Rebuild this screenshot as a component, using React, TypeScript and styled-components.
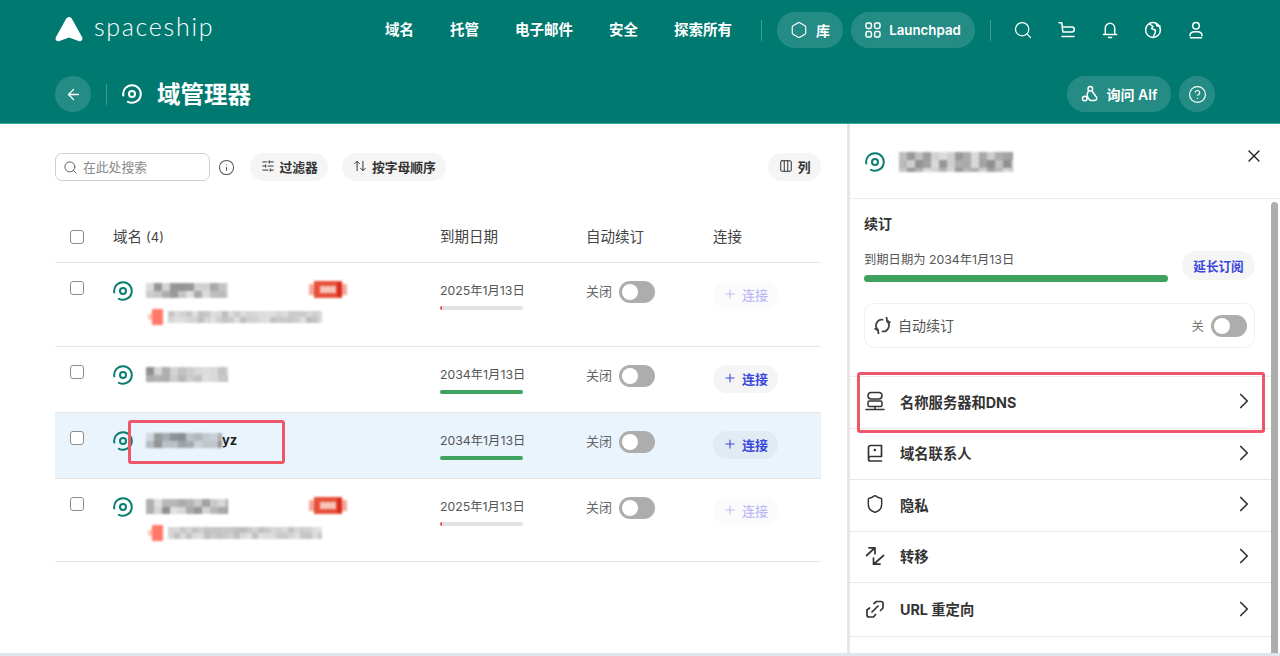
import { ReactNode } from 'react'
import styled, { createGlobalStyle } from 'styled-components'
import {
  ArrowLeft,
  ArrowUpDown,
  ChevronRight,
  CircleHelp,
  Columns3,
  Hexagon,
  Info,
  Plus,
  Search,
  Shield,
  SlidersHorizontal,
  X,
} from 'lucide-react'

const FONT = `Inter, "Noto Sans CJK SC", "Noto Sans", sans-serif`
const TEAL = '#007a70'

const GlobalStyle = createGlobalStyle`
  html, body {
    margin: 0;
    height: 656px;
    overflow: hidden;
    background: #fff;
    font-family: ${FONT};
  }
  * {
    box-sizing: border-box;
  }
`

function Mosaic({ width, height, seed, cell = 8, dark = 0.5 }: { width: number; height: number; seed: number; cell?: number; dark?: number }) {
  const cells = []
  let value = seed
  for (let y = 0; y < height; y += cell) {
    for (let x = 0; x < width; x += cell) {
      value = (value * 7919 + 104729) % 997
      cells.push(<rect key={`${x}-${y}`} x={x} y={y} width={cell} height={cell} fill={`rgba(90,90,90,${(0.18 + (value / 997) * dark).toFixed(2)})`} />)
    }
  }
  return (
    <BlurSvg width={width} height={height} viewBox={`0 0 ${width} ${height}`}>
      {cells}
    </BlurSvg>
  )
}

const RedTag = () => (
  <BlurSvg width={38} height={17} viewBox="0 0 38 17">
    <rect x="0" y="3" width="38" height="11" fill="#f4a79b" />
    <rect x="5" y="0" width="28" height="17" fill="#e8503c" />
    <rect x="11" y="5" width="16" height="7" fill="#f6c4ba" />
    <rect x="28" y="1" width="5" height="15" fill="#dc2a18" />
  </BlurSvg>
)

const SquareTag = () => (
  <BlurSvg width={15} height={16} viewBox="0 0 15 16">
    <rect x="0" y="5" width="15" height="6" fill="#ffc2b8" />
    <rect x="4" y="0" width="11" height="16" fill="#ff7a68" />
  </BlurSvg>
)

const DiscIcon = ({ color = '#0b7d72', size = 20 }: { color?: string; size?: number }) => (
  <svg width={size} height={size} viewBox="0 0 20 20" fill="none" stroke={color} strokeWidth="2" strokeLinecap="round">
    <circle cx="10" cy="10" r="3" />
    <path d="M1.300 11.500A8.800 8.800 0 1 1 6 17.800" />
  </svg>
)

const CartIcon = () => (
  <svg width="18" height="18" viewBox="0 0 18 18" fill="none" stroke="currentColor" strokeWidth="1.5" strokeLinecap="round" strokeLinejoin="round">
    <path d="M1 1.800h2.800l1 9.200h9a2.500 2.500 0 0 0 0-5H4.300" />
    <path d="M4 15.500h12" />
  </svg>
)

const BellIcon = () => (
  <svg width="18" height="18" viewBox="0 0 18 18" fill="none" stroke="currentColor" strokeWidth="1.5" strokeLinecap="round" strokeLinejoin="round">
    <path d="M2.500 13.500h13M4.300 13.500V7a4.700 4.700 0 0 1 9.400 0v6.500" />
    <path d="M7.500 16.500h3" />
  </svg>
)

const GlobeIcon = () => (
  <svg width="18" height="18" viewBox="0 0 18 18" fill="none" stroke="currentColor" strokeWidth="1.5" strokeLinecap="round" strokeLinejoin="round">
    <circle cx="9" cy="9" r="7.400" />
    <path d="M5.500 2.800 9 5.500 7.500 7.500l4 1.800-.5 3-1.500 3.200M12 2.400l1 2.600h3" />
  </svg>
)

const UserIcon = () => (
  <svg width="18" height="18" viewBox="0 0 18 18" fill="none" stroke="currentColor" strokeWidth="1.5" strokeLinecap="round">
    <circle cx="9" cy="4.800" r="3.300" />
    <path d="M3 14.800c0-2.500 2-4 4.500-4h3c2.500 0 4.500 1.500 4.500 4" />
    <path d="M3.500 16.800h11" />
  </svg>
)

const AlfIcon = () => (
  <svg width="18" height="18" viewBox="0 0 18 18" fill="none" stroke="currentColor" strokeWidth="1.5" strokeLinecap="round">
    <circle cx="3.800" cy="13.500" r="2.300" />
    <circle cx="9.300" cy="3.800" r="2.300" />
    <path d="M7.600 5.400 6.200 9c-.6 1.500 1.600 6.500 4 6.500h3.300a2.400 2.400 0 0 0 1.200-4.400L11 6" />
  </svg>
)

const LaunchpadIcon = () => (
  <svg width="16" height="16" viewBox="0 0 16 16" fill="none" stroke="currentColor" strokeWidth="1.5">
    <rect x="1" y="1" width="5.400" height="5.400" rx="1.600" />
    <rect x="9.600" y="1" width="5.400" height="5.400" rx="1.600" />
    <rect x="1" y="9.600" width="5.400" height="5.400" rx="1.600" />
    <rect x="9.600" y="9.600" width="5.400" height="5.400" rx="1.600" />
  </svg>
)

const ServerIcon = () => (
  <svg width="20" height="20" viewBox="0 0 20 20" fill="none" stroke="currentColor" strokeWidth="1.500" strokeLinecap="round">
    <rect x="3" y="1.500" width="14" height="6.500" rx="3.200" />
    <rect x="3" y="10" width="14" height="5.500" rx="1.500" />
    <path d="M10 15.500V18.500M1 18.500h18" />
  </svg>
)

const BookIcon = () => (
  <svg width="20" height="20" viewBox="0 0 20 20" fill="none" stroke="currentColor" strokeWidth="1.700" strokeLinecap="round" strokeLinejoin="round">
    <path d="M16.500 13.500V2.500h-11a2 2 0 0 0-2 2V16a2 2 0 0 0 2 2h11M16.500 13.500h-11a2.200 2.200 0 0 0-2 2.200" />
    <path d="M9.800 7h.1" strokeWidth="2.400" />
  </svg>
)

const TransferIcon = () => (
  <svg width="20" height="20" viewBox="0 0 20 20" fill="none" stroke="currentColor" strokeWidth="1.700" strokeLinecap="round" strokeLinejoin="round">
    <path d="M1.500 9.500 9.800 2M4 1.800h6v6" />
    <path d="M18.500 9.500 9 18M15 18.200H8.500V12" />
  </svg>
)

const RedirectIcon = () => (
  <svg width="20" height="20" viewBox="0 0 20 20" fill="none" stroke="currentColor" strokeWidth="1.700" strokeLinecap="round" strokeLinejoin="round">
    <path d="M9 4.500l2.500-2H16a2 2 0 0 1 2 2V9l-2.500 2.500" />
    <path d="M4.500 9 2 11v5a2 2 0 0 0 2 2h4.500l2-2.500" />
    <path d="M7 13l6-6" />
  </svg>
)

const RenewIcon = () => (
  <svg width="17" height="17" viewBox="0 0 17 17" fill="none" stroke="currentColor" strokeWidth="1.800" strokeLinecap="round" strokeLinejoin="round">
    <path d="M8.500 2.600A6 6 0 0 0 4 13" />
    <path d="M1.200 11.800 4 13.500l.5 3" />
    <path d="M8.500 14.400A6 6 0 0 0 13 4" />
    <path d="M15.800 5.200 13 3.500l-.5-3" />
  </svg>
)

const Logo = () => (
  <svg width="28" height="26" viewBox="0 0 28 26" fill="#fff">
    <path d="M14 1c1.500 0 2.500 1 3 2l10 18c1.500 3-1 5-3.500 4L14 21.500 4.500 25C2 26-.5 24 1 21L11 3c.5-1 1.500-2 3-2Z" />
  </svg>
)

type Domain = {
  seed: number
  expiry: string
  height: number
  expired?: boolean
  selected?: boolean
  suffix?: string
}

const DOMAINS: Domain[] = [
  { seed: 17, expiry: '2025年1月13日', height: 84, expired: true },
  { seed: 211, expiry: '2034年1月13日', height: 66 },
  { seed: 403, expiry: '2034年1月13日', height: 66, selected: true, suffix: 'yz' },
  { seed: 655, expiry: '2025年1月13日', height: 83, expired: true },
]

const MENU: { label: string; icon: ReactNode; marked?: boolean }[] = [
  { label: '名称服务器和DNS', icon: <ServerIcon />, marked: true },
  { label: '域名联系人', icon: <BookIcon /> },
  { label: '隐私', icon: <Shield size={20} strokeWidth={1.7} /> },
  { label: '转移', icon: <TransferIcon /> },
  { label: 'URL 重定向', icon: <RedirectIcon /> },
]

const NAV = ['域名', '托管', '电子邮件', '安全', '探索所有']

export default function App() {
  return (
    <Page>
      <GlobalStyle />
      <Header>
        <TopBar>
          <Brand>
            <Logo />
            <BrandName>spaceship</BrandName>
          </Brand>
          <Nav>
            {NAV.map((item) => (
              <NavLink key={item}>{item}</NavLink>
            ))}
          </Nav>
          <NavDivider $left={29} />
          <GlassPill $left={15} $width={66}>
            <Hexagon size={18} strokeWidth={1.5} />库
          </GlassPill>
          <GlassPill $left={8} $width={124} $small>
            <LaunchpadIcon />
            Launchpad
          </GlassPill>
          <NavDivider $left={15} />
          <IconRow>
            <Search size={20} strokeWidth={1.5} />
            <CartIcon />
            <BellIcon />
            <GlobeIcon />
            <UserIcon />
          </IconRow>
        </TopBar>
        <SubBar>
          <RoundGlass>
            <ArrowLeft size={17} strokeWidth={1.8} />
          </RoundGlass>
          <SubDivider />
          <DiscIcon color="#fff" />
          <Title>域管理器</Title>
          <SubActions>
            <GlassPill $left={0} $width={104}>
              <AlfIcon />
              询问 Alf
            </GlassPill>
            <RoundGlass>
              <CircleHelp size={19} strokeWidth={1.5} />
            </RoundGlass>
          </SubActions>
        </SubBar>
      </Header>

      <Main>
        <ListPane>
          <Toolbar>
            <SearchBox>
              <Search size={15} strokeWidth={1.6} color="#666" />
              <SearchHint>在此处搜索</SearchHint>
            </SearchBox>
            <InfoWrap>
              <Info size={17} strokeWidth={1.5} />
            </InfoWrap>
            <ToolPill>
              <SlidersHorizontal size={14} strokeWidth={1.7} />
              过滤器
            </ToolPill>
            <ToolPill>
              <ArrowUpDown size={14} strokeWidth={1.7} />
              按字母顺序
            </ToolPill>
            <ColumnsPill>
              <Columns3 size={14} strokeWidth={1.7} />列
            </ColumnsPill>
          </Toolbar>

          <HeadRow>
            <CheckCell>
              <Check />
            </CheckCell>
            <HeadCell>
              域名 <Count>(4)</Count>
            </HeadCell>
            <HeadCell>到期日期</HeadCell>
            <HeadCell>自动续订</HeadCell>
            <HeadCell>连接</HeadCell>
          </HeadRow>

          {DOMAINS.map((d) => (
            <Row key={d.seed} $selected={d.selected} $height={d.height}>
              <CheckCell>
                <Check />
              </CheckCell>
              <NameCell>
                <DiscSlot>
                  <DiscIcon />
                </DiscSlot>
                <NameStack>
                  <NameLine>
                    <Mosaic width={d.suffix ? 76 : 82} height={15} seed={d.seed} />
                    {d.suffix && <Suffix>{d.suffix}</Suffix>}
                    {d.expired && (
                      <TagSlot>
                        <RedTag />
                      </TagSlot>
                    )}
                  </NameLine>
                  {d.expired && (
                    <SubLine>
                      <SquareTag />
                      <Mosaic width={154} height={12} seed={d.seed + 5} cell={6} dark={0.22} />
                    </SubLine>
                  )}
                </NameStack>
                {d.selected && <NameMark />}
              </NameCell>
              <ExpiryCell>
                <DateText>{d.expiry}</DateText>
                <Track>
                  <Fill $expired={d.expired} />
                </Track>
              </ExpiryCell>
              <AutoCell>
                <ToggleLabel>关闭</ToggleLabel>
                <Toggle />
              </AutoCell>
              <ConnectCell>
                <ConnectButton $muted={d.expired} $selected={d.selected}>
                  <Plus size={14} strokeWidth={1.8} />
                  连接
                </ConnectButton>
              </ConnectCell>
            </Row>
          ))}
        </ListPane>

        <DetailPane>
          <DetailHead>
            <DiscIcon />
            <DetailName>
              <Mosaic width={114} height={20} seed={98} />
            </DetailName>
            <CloseSlot>
              <X size={20} strokeWidth={1.6} />
            </CloseSlot>
          </DetailHead>
          <DetailBody>
            <DetailContent>
              <Renewal>
                <SectionTitle>续订</SectionTitle>
                <RenewalLine>
                  <RenewalInfo>
                    <RenewalDate>到期日期为 2034年1月13日</RenewalDate>
                    <RenewalBar />
                  </RenewalInfo>
                  <ExtendButton>延长订阅</ExtendButton>
                </RenewalLine>
                <AutoCard>
                  <RenewIcon />
                  <AutoText>自动续订</AutoText>
                  <OffLabel>关</OffLabel>
                  <Toggle />
                </AutoCard>
              </Renewal>
              <Menu>
                {MENU.map((m) => (
                  <MenuRow key={m.label}>
                    <MenuIcon>{m.icon}</MenuIcon>
                    <MenuLabel>{m.label}</MenuLabel>
                    <ChevronRight size={26} strokeWidth={1.6} />
                    {m.marked && <RowMark />}
                  </MenuRow>
                ))}
              </Menu>
            </DetailContent>
            <ScrollTrack>
              <ScrollThumb />
            </ScrollTrack>
          </DetailBody>
        </DetailPane>
      </Main>
      <BottomEdge />
    </Page>
  )
}

const Page = styled.div`
  display: flex;
  flex-direction: column;
  width: 1280px;
  height: 656px;
  overflow: hidden;
`

const Header = styled.header`
  flex: 0 0 124px;
  background: ${TEAL};
  color: #fff;
  border-bottom: 1px solid #34a79c;
`

const TopBar = styled.div`
  display: flex;
  align-items: center;
  height: 60px;
  padding-left: 55px;
`

const Brand = styled.div`
  display: flex;
  align-items: center;
  gap: 11px;
  width: 330px;
  margin-top: -3px;
`

const BrandName = styled.span`
  margin-bottom: 6px;
  font-family: Lato, sans-serif;
  font-weight: 300;
  font-size: 25px;
  letter-spacing: 1.7px;
`

const Nav = styled.nav`
  display: flex;
  gap: 36px;
`

const NavLink = styled.a`
  font-size: 14.5px;
  font-weight: 700;
  line-height: 20px;
`

const NavDivider = styled.span<{ $left: number }>`
  width: 1px;
  height: 21px;
  margin-left: ${(p) => p.$left}px;
  background: rgba(255, 255, 255, 0.25);
`

const GlassPill = styled.div<{ $left: number; $width: number; $small?: boolean }>`
  display: flex;
  align-items: center;
  justify-content: center;
  gap: 8px;
  width: ${(p) => p.$width}px;
  height: 36px;
  margin-left: ${(p) => p.$left}px;
  border-radius: 18px;
  background: rgba(255, 255, 255, 0.14);
  font-size: ${(p) => (p.$small ? 13.3 : 14)}px;
  font-weight: 600;
`

const IconRow = styled.div`
  display: flex;
  align-items: center;
  gap: 25px;
  margin-left: 22px;
`

const SubBar = styled.div`
  display: flex;
  align-items: center;
  height: 63px;
  padding: 5px 65px 0 55px;
`

const RoundGlass = styled.div`
  display: flex;
  align-items: center;
  justify-content: center;
  width: 36px;
  height: 36px;
  border-radius: 50%;
  background: rgba(255, 255, 255, 0.14);
`

const SubDivider = styled.span`
  width: 1px;
  height: 21px;
  margin: 0 15px;
  background: rgba(255, 255, 255, 0.25);
`

const Title = styled.h1`
  margin: 1px 0 0 15px;
  font-size: 23.5px;
  font-weight: 700;
  line-height: 30px;
`

const SubActions = styled.div`
  display: flex;
  gap: 8px;
  margin-left: auto;
`

const Main = styled.main`
  flex: 1;
  display: flex;
  min-height: 0;
`

const ListPane = styled.section`
  flex: 0 0 847px;
  padding: 29px 26px 0 55px;
`

const Toolbar = styled.div`
  display: flex;
  align-items: center;
  height: 28px;
`

const SearchBox = styled.div`
  display: flex;
  align-items: center;
  gap: 5px;
  width: 155px;
  height: 28px;
  padding-left: 7px;
  border: 1px solid #cfcfcf;
  border-radius: 7px;
`

const SearchHint = styled.span`
  margin-top: -2px;
  font-size: 12.8px;
  color: #8a8a8a;
`

const InfoWrap = styled.span`
  display: flex;
  margin: 0 15px 0 8px;
  color: #555;
`

const ToolPill = styled.div`
  display: flex;
  align-items: center;
  gap: 5px;
  height: 28px;
  padding: 0 10.500px 2px;
  margin-right: 14px;
  border-radius: 14px;
  background: #f5f5f5;
  color: #333;
  font-size: 12.8px;
  font-weight: 700;
`

const ColumnsPill = styled(ToolPill)`
  margin: 0 0 0 auto;
`

const HeadRow = styled.div`
  display: grid;
  grid-template-columns: 58px 327px 146px 127px 1fr;
  align-items: center;
  height: 82px;
  padding-top: 31px;
  border-bottom: 1px solid #e6e6e6;
`

const HeadCell = styled.div`
  font-size: 14.5px;
  color: #444;
  line-height: 20px;
`

const Count = styled.span`
  font-size: 13px;
`

const CheckCell = styled.div`
  display: flex;
  padding-left: 15px;
`

const Check = styled.span`
  display: block;
  width: 14px;
  height: 14px;
  border: 1.5px solid #8c8c8c;
  border-radius: 3px;
  background: #fff;
`

const Row = styled.div<{ $selected?: boolean; $height: number }>`
  display: grid;
  grid-template-columns: 58px 327px 146px 127px 1fr;
  align-items: start;
  height: ${(p) => p.$height}px;
  padding-top: 18px;
  background: ${(p) => (p.$selected ? '#eaf4fd' : '#fff')};
  border-bottom: 1px solid #e6e6e6;
`

const NameCell = styled.div`
  position: relative;
  display: flex;
  gap: 13px;
`

const DiscSlot = styled.span`
  display: flex;
`

const NameStack = styled.div`
  display: flex;
  flex-direction: column;
  gap: 11px;
  margin-top: 1px;
`

const NameLine = styled.div`
  position: relative;
  display: flex;
  align-items: center;
  height: 16px;
`

const BlurSvg = styled.svg`
  display: block;
  flex: none;
  filter: blur(1.1px);
`

const Suffix = styled.span`
  margin-top: -1px;
  font-size: 13px;
  font-weight: 700;
  color: #222;
`

const TagSlot = styled.span`
  position: absolute;
  left: 163px;
  top: -1px;
`

const SubLine = styled.div`
  display: flex;
  align-items: center;
  gap: 5px;
  margin-left: 2px;
`

const NameMark = styled.span`
  position: absolute;
  left: 15px;
  top: -11px;
  width: 157px;
  height: 44px;
  border: 3px solid #f0566a;
  border-radius: 3px;
`

const ExpiryCell = styled.div`
  display: flex;
  flex-direction: column;
  gap: 6px;
  width: 83px;
  margin-top: 1px;
`

const DateText = styled.span`
  font-size: 12.3px;
  line-height: 18px;
  color: #555;
  white-space: nowrap;
`

const Track = styled.div`
  height: 3.5px;
  border-radius: 2px;
  background: #e2e2e2;
  overflow: hidden;
`

const Fill = styled.div<{ $expired?: boolean }>`
  width: ${(p) => (p.$expired ? '2px' : '100%')};
  height: 100%;
  background: ${(p) => (p.$expired ? '#ef5350' : '#3fa25f')};
`

const AutoCell = styled.div`
  display: flex;
  align-items: center;
  gap: 7px;
`

const ToggleLabel = styled.span`
  margin-top: -3px;
  font-size: 13px;
  color: #666;
`

const Toggle = styled.span`
  display: flex;
  align-items: center;
  width: 36px;
  height: 22px;
  padding-left: 3px;
  border-radius: 11px;
  background: #adadad;

  &::before {
    content: '';
    width: 16px;
    height: 16px;
    border-radius: 50%;
    background: #fff;
  }
`

const ConnectCell = styled.div`
  display: flex;
`

const ConnectButton = styled.div<{ $muted?: boolean; $selected?: boolean }>`
  display: flex;
  align-items: center;
  justify-content: center;
  gap: 5px;
  width: 65px;
  height: 28px;
  padding-bottom: 2px;
  border-radius: 14px;
  background: ${(p) => (p.$selected ? '#e2eaf3' : p.$muted ? '#fbfbfb' : '#f5f5f5')};
  color: ${(p) => (p.$muted ? '#bcbaf6' : '#3a46dd')};
  font-size: 13px;
  font-weight: ${(p) => (p.$muted ? 500 : 700)};
`

const DetailPane = styled.aside`
  flex: 1;
  display: flex;
  flex-direction: column;
  min-width: 0;
  border-left: 3px solid #e6e6e6;
`

const DetailHead = styled.div`
  position: relative;
  display: flex;
  align-items: center;
  flex: 0 0 75px;
  padding: 1px 0 0 15px;
  border-bottom: 1px solid #eee;
`

const DetailName = styled.div`
  margin-left: 14px;
`

const CloseSlot = styled.span`
  position: absolute;
  right: 16px;
  top: 22px;
  display: flex;
  color: #222;
`

const DetailBody = styled.div`
  flex: 1;
  display: flex;
  min-height: 0;
`

const DetailContent = styled.div`
  flex: 1;
  min-width: 0;
`

const Renewal = styled.div`
  display: flex;
  flex-direction: column;
  height: 177px;
  padding: 16px 16px 0 14px;
`

const SectionTitle = styled.h2`
  margin: -1px 0 1px;
  font-size: 14px;
  font-weight: 700;
  line-height: 20px;
  color: #333;
`

const RenewalLine = styled.div`
  display: flex;
  justify-content: space-between;
  margin-top: 16px;
`

const RenewalInfo = styled.div`
  display: flex;
  flex-direction: column;
  gap: 6px;
  width: 304px;
`

const RenewalDate = styled.span`
  font-size: 12.3px;
  line-height: 18px;
  color: #555;
`

const RenewalBar = styled.div`
  height: 7px;
  border-radius: 4px;
  background: #3fa25f;
`

const ExtendButton = styled.div`
  display: flex;
  align-items: center;
  justify-content: center;
  width: 73px;
  height: 29px;
  border-radius: 15px;
  background: #f5f5f5;
  color: #3a46dd;
  font-size: 12.6px;
  font-weight: 700;
`

const AutoCard = styled.div`
  display: flex;
  align-items: center;
  height: 45px;
  margin-top: 21px;
  padding: 0 7px 0 9px;
  border: 1px solid #f0f0f0;
  border-radius: 10px;
  color: #444;
`

const AutoText = styled.span`
  margin: -2px 0 0 7px;
  font-size: 14px;
  color: #555;
`

const OffLabel = styled.span`
  margin: -1px 7px 0 auto;
  font-size: 12.5px;
  color: #777;
`

const Menu = styled.div`
  border-top: 1px solid #ececec;
`

const MenuRow = styled.div`
  position: relative;
  display: flex;
  align-items: center;
  height: 51.5px;
  padding: 0 14px 2px 15px;
  border-bottom: 1px solid #e8e8e8;
  color: #333;

  &:last-child {
    height: 54px;
  }
`

const MenuIcon = styled.span`
  display: flex;
  width: 35px;
`

const MenuLabel = styled.span`
  flex: 1;
  font-size: 14.3px;
  font-weight: 700;
`

const RowMark = styled.span`
  position: absolute;
  left: 7px;
  top: -5px;
  width: 408px;
  height: 61px;
  border: 3px solid #f0566a;
  border-radius: 3px;
`

const ScrollTrack = styled.div`
  flex: 0 0 9px;
  padding-top: 3px;
`

const ScrollThumb = styled.div`
  width: 7px;
  height: 100%;
  border-radius: 4px 4px 0 0;
  background: #adadad;
`

const BottomEdge = styled.div`
  flex: 0 0 3px;
  background: #dbe8f1;
`
